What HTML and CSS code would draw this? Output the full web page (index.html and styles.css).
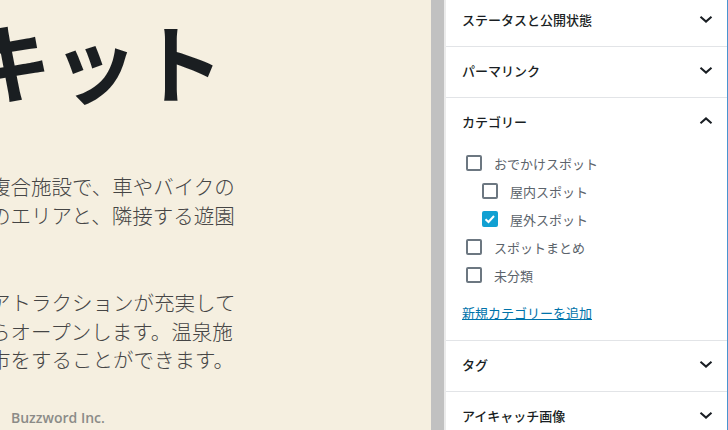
FILE: index.html
```html
<!DOCTYPE html>
<html lang="ja">
<head>
  <meta charset="UTF-8" />
  <title>投稿の編集</title>
  <link rel="stylesheet" href="styles.css">
</head>
<body>
  <div class="editor">
    <h1 class="post-title">キット</h1>
    <p class="post-text">
      複合施設で、車やバイクの<br>
      のエリアと、隣接する遊園
    </p>
    <p class="post-text second">
      アトラクションが充実して<br>
      らオープンします。温泉施<br>
      市をすることができます。
    </p>
    <div class="footer-name">Buzzword Inc.</div>
  </div>
  <div class="scrollbar"></div>

  <div class="sidebar">
    <div class="panel">
      <h2 class="panel-head">ステータスと公開状態
        <svg viewBox="0 0 24 24" width="24" height="24"><path d="M6.5 9.8L12 14.6l5.5-4.8"/></svg>
      </h2>
    </div>
    <div class="panel">
      <h2 class="panel-head">パーマリンク
        <svg viewBox="0 0 24 24" width="24" height="24"><path d="M6.5 9.8L12 14.6l5.5-4.8"/></svg>
      </h2>
    </div>
    <div class="panel">
      <h2 class="panel-head">カテゴリー
        <svg viewBox="0 0 24 24" width="24" height="24"><path d="M6.5 14.2L12 9.4l5.5 4.8"/></svg>
      </h2>
      <div class="panel-body">
        <ul class="cat-list">
          <li><span class="box"></span>おでかけスポット</li>
          <li class="child"><span class="box"></span>屋内スポット</li>
          <li class="child"><span class="box checked">
            <svg viewBox="0 0 16 16" width="16" height="16"><path d="M3.5 8.2l3 2.8 5.5-6" fill="none" stroke="#fff" stroke-width="2"/></svg>
          </span>屋外スポット</li>
          <li><span class="box"></span>スポットまとめ</li>
          <li><span class="box"></span>未分類</li>
        </ul>
        <a class="add-link" href="#">新規カテゴリーを追加</a>
      </div>
    </div>
    <div class="panel">
      <h2 class="panel-head">タグ
        <svg viewBox="0 0 24 24" width="24" height="24"><path d="M6.5 9.8L12 14.6l5.5-4.8"/></svg>
      </h2>
    </div>
    <div class="panel">
      <h2 class="panel-head">アイキャッチ画像
        <svg viewBox="0 0 24 24" width="24" height="24"><path d="M6.5 9.8L12 14.6l5.5-4.8"/></svg>
      </h2>
    </div>
  </div>
</body>
</html>
```

FILE: styles.css
```css
body {
  margin: 0;
  height: 430px;
  overflow: hidden;
  display: flex;
  font-family: "Noto Sans CJK JP", "Noto Sans", sans-serif;
  background: #fff;
}

.editor {
  width: 431px;
  flex-shrink: 0;
  background: #f5efe0;
  overflow: hidden;
  white-space: nowrap;
}

.post-title {
  margin: 17px 0 0 -34px;
  font-size: 86px;
  line-height: 1;
  font-weight: bold;
  color: #1a1e21;
}

.post-text {
  margin: 69px 0 0 -10px;
  font-size: 20.5px;
  line-height: 28.5px;
  font-weight: 300;
  color: #454545;
}

.post-text.second {
  margin-top: 59px;
}

.footer-name {
  margin: 34px 0 0 11px;
  font-family: "Open Sans", sans-serif;
  font-size: 14px;
  font-weight: 600;
  color: #8b8b88;
}

.scrollbar {
  width: 13px;
  flex-shrink: 0;
  background: #c1c1c1;
  border-right: 2px solid #ebebeb;
}

.sidebar {
  flex: 1;
  margin-top: -4px;
  border-right: 1px solid #4a94d0;
}

.panel {
  border-bottom: 1px solid #e2e4e7;
}

.panel-head {
  margin: 0;
  height: 50px;
  box-sizing: border-box;
  padding: 0 9px 4px 16px;
  display: flex;
  align-items: center;
  justify-content: space-between;
  font-size: 13px;
  font-weight: 500;
  color: #191e23;
}

.panel-head svg {
  fill: none;
  stroke: #191e23;
  stroke-width: 2;
}

.panel-body {
  padding: 1px 16px 17px;
}

.cat-list {
  list-style: none;
  margin: 0;
  padding: 0;
}

.cat-list li {
  height: 28px;
  display: flex;
  align-items: center;
  gap: 12px;
  padding-left: 4px;
  font-size: 13px;
  color: #5b636b;
}

.cat-list li.child {
  padding-left: 20px;
}

.box {
  width: 16px;
  height: 16px;
  box-sizing: border-box;
  border: 2px solid #6c7781;
  border-radius: 2px;
  display: flex;
  align-items: center;
  justify-content: center;
}

.box.checked {
  background: #11a0d2;
  border-color: #11a0d2;
}

.box svg {
  flex-shrink: 0;
}

.add-link {
  display: block;
  margin-top: 14px;
  font-size: 13px;
  line-height: 20px;
  color: #0073aa;
  text-decoration: underline;
}
```
